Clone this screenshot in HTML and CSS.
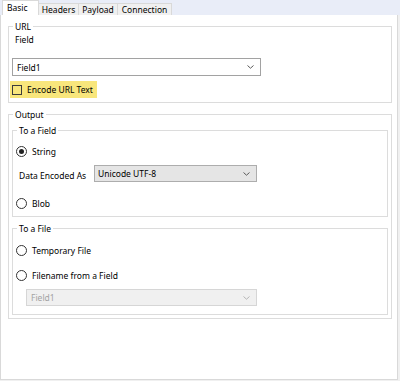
FILE: index.html
```html
<!DOCTYPE html>
<html lang="en">
<head>
	<meta charset="UTF-8">
	<title>Basic</title>
	<link rel="stylesheet" href="styles.css">
</head>
<body>
	<div class="window">
		<div class="tabs">
			<span class="tab on">Basic</span>
			<span class="tab t-headers">Headers</span>
			<span class="tab t-payload">Payload</span>
			<span class="tab t-conn">Connection</span>
		</div>
		<div class="panel">
			<fieldset class="group url">
				<legend>URL</legend>
				<div class="label">Field</div>
				<div class="combo field">
					<span>Field1</span>
					<svg class="chev" width="7" height="4" viewBox="0 0 7 4"><path d="M0.5 0.5 L3.5 3.2 L6.5 0.5" fill="none" stroke="#5a5a5a" stroke-width="1"/></svg>
				</div>
				<label class="hilite">
					<span class="check"></span>
					<span>Encode URL Text</span>
				</label>
			</fieldset>

			<fieldset class="group output">
				<legend>Output</legend>
				<fieldset class="group inner field-group">
					<legend>To a Field</legend>
					<div class="option first">
						<span class="radio on"></span>
						<span>String</span>
					</div>
					<div class="enc">
						<span class="enc-label">Data Encoded As</span>
						<div class="combo gray">
							<span>Unicode UTF-8</span>
							<svg class="chev" width="7" height="4" viewBox="0 0 7 4"><path d="M0.5 0.5 L3.5 3.2 L6.5 0.5" fill="none" stroke="#5a5a5a" stroke-width="1"/></svg>
						</div>
					</div>
					<div class="option blob">
						<span class="radio"></span>
						<span>Blob</span>
					</div>
				</fieldset>
				<fieldset class="group inner file-group">
					<legend>To a File</legend>
					<div class="option first">
						<span class="radio"></span>
						<span>Temporary File</span>
					</div>
					<div class="option second">
						<span class="radio"></span>
						<span>Filename from a Field</span>
					</div>
					<div class="combo disabled">
						<span>Field1</span>
						<svg class="chev" width="7" height="4" viewBox="0 0 7 4"><path d="M0.5 0.5 L3.5 3.2 L6.5 0.5" fill="none" stroke="#b5b5b5" stroke-width="1"/></svg>
					</div>
				</fieldset>
			</fieldset>
		</div>
	</div>
</body>
</html>
```

FILE: styles.css
```css
html, body { margin: 0; padding: 0; }
body { background: #f0f0f0; font-family: "Noto Sans", "Open Sans", sans-serif; font-size: 8.5px; color: #000; }

.window { width: 398px; height: 380px; display: flex; flex-direction: column; }

/* tab strip */
.tabs { height: 15px; background: #e9edf8; display: flex; align-items: flex-end; padding-left: 2px; width: 400px; }
.tab { height: 12px; line-height: 12px; text-align: center; background: #f0f0f0; border: 1px solid #d9d9d9; border-bottom: none; border-left: none; box-sizing: border-box; }
.tab.on { width: 37px; height: 15px; line-height: 13px; text-align: left; padding-left: 4px; background: #fff; border-left: 1px solid #d9d9d9; }
.t-headers { width: 40px; }
.t-payload { width: 39px; }
.t-conn { width: 54px; }

.panel { flex: 1; background: #fff; border: 1px solid #d9d9d9; border-top: none; padding: 6px 5px 0 7px; }

/* group boxes */
.group { margin: 0; padding: 0; border: 1px solid #dcdcdc; min-width: 0; }
.group legend { padding: 0 2px; margin-left: 4px; line-height: 11px; }

.url { padding-bottom: 4px; }
.url .label { margin: 2px 0 0 6px; line-height: 12px; }

.combo { height: 18px; box-sizing: border-box; border: 1px solid #a2a2a2; background: #fff; display: flex; align-items: center; justify-content: space-between; padding: 0 6px 0 4px; }
.combo.field { margin: 12px 0 0 3px; width: 249px; }
.combo.gray { width: 163px; height: 17px; background: #e5e5e5; border-color: #adadad; padding-left: 3px; }
.combo.disabled { width: 231px; height: 17px; margin: 8px 0 0 13px; background: #f0f0f0; border-color: #d6d6d6; color: #a3a3a3; }

.hilite { display: flex; align-items: center; margin: 5px 0 0 1px; width: 87px; height: 17px; background: #f8e67c; }
.check { width: 10px; height: 10px; box-sizing: border-box; border: 1px solid #3c3c3c; margin: 0 5px 0 2px; }

.output { margin-top: 6px; }
.inner { margin: 5px 3px 0 3px; }
.file-group { margin-top: 6px; margin-bottom: 3px; padding-bottom: 8px; }
.field-group { padding-bottom: 7px; }

.option { display: flex; align-items: center; height: 12px; margin-left: 3px; }
.option.first { margin-top: 9px; }
.file-group .option.first { margin-top: 10px; }
.option.second { margin-top: 13px; }
.option.blob { margin-top: 15px; }

.radio { width: 11px; height: 11px; box-sizing: border-box; border: 1px solid #333; border-radius: 50%; margin-right: 5px; display: flex; align-items: center; justify-content: center; }
.radio.on::after { content: ""; width: 5px; height: 5px; border-radius: 50%; background: #222; }

.enc { display: flex; align-items: center; margin-top: 8px; }
.enc-label { width: 75px; margin: 3px 0 0 6px; }
```
